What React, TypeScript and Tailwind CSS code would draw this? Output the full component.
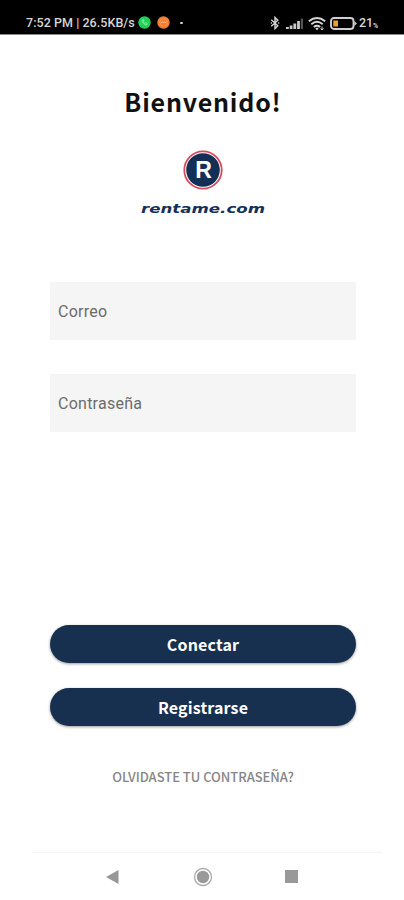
import React, { useState } from 'react';

// Barra de estado del teléfono
const StatusBar: React.FC = () => (
  <header className="flex h-[35px] items-end border-b border-[#8a8a8a] bg-black pr-[25px] pb-[2px] pl-[26px] font-[Roboto,sans-serif] text-[#d6d6d6]">
    <span className="w-[109px] text-[12.5px] leading-[18px] font-medium tracking-[0.05px] whitespace-nowrap">
      7:52 PM | 26.5KB/s
    </span>
    <svg className="mb-[3px] ml-[3px] h-[13px] w-[13px]" viewBox="0 0 13 13">
      <circle cx="6.5" cy="6.5" r="6.2" fill="#22cf5b" />
      <path d="M4.3 3.8c-1.2 1.5 2.7 5.900 4.600 4.900l.3-1.200-1.400-.7-.8.7C6 7 5.600 6.300 5.500 5.800l.5-.7-.6-1.400Z" fill="none" stroke="#8df2a8" strokeWidth=".9" />
    </svg>
    <svg className="mb-[3px] ml-[6px] h-[13px] w-[13px]" viewBox="0 0 13 13">
      <circle cx="6.5" cy="6.5" r="6.2" fill="#f47a2c" />
      <circle cx="6.5" cy="6.5" r="3.8" fill="none" stroke="#fb9d60" strokeWidth=".8" />
      <path d="M3.800 7q1.400-1.600 2.700-.6 1.300-1 2.700.6" fill="none" stroke="#ffc29b" strokeWidth="1" />
    </svg>
    <span className="mb-[8px] ml-[10px] h-[2px] w-[3px] rounded-full bg-[#d0d0d0]" />

    <div className="ml-auto flex h-[18px] items-center">
      <svg className="mr-px h-[14px] w-[10px]" viewBox="0 0 10 15" fill="none" stroke="#d6d6d6" strokeWidth="1.5">
        <path d="m1 4 7 6.5L5 13.5v-12L8 4.500 1 11" />
        <path d="M.5 7.500h1.200M8.400 7.500h1.200" />
      </svg>
      <svg className="ml-[5px] h-[13px] w-[18px]" viewBox="0 0 18 13" fill="#c8c8c8">
        <path d="M0 10h2.800v2H0zM3.700 8.500h2.800V12H3.700zM7.400 6.500h2.800V12H7.400zM11.100 4h2.800v8h-2.800z" />
        <path d="M14.800 1.500H17V12h-2.200z" fill="#555" />
      </svg>
      <svg className="ml-[4px] h-[15px] w-[18px]" viewBox="0 0 18 15" fill="none" stroke="#d6d6d6" strokeWidth="1.900">
        <path d="M.8 5.200q8.200-6.400 16.400 0M3.300 8.200q5.700-4.700 11.400 0M5.800 10.900q3.200-2.500 6.400 0" />
        <path d="m7.300 12.600 1.700-1 1.700 1L9 14.200Z" fill="#d6d6d6" stroke="none" />
        <path d="M14 10.500V14M12.500 12.500 14 14l1.500-1.500" strokeWidth="1" />
      </svg>
      <svg className="ml-[4px] h-[13px] w-[27px]" viewBox="0 0 27 13">
        <rect x="1" y="1" width="22.500" height="11" rx="3" fill="none" stroke="#cfcfcf" strokeWidth="1.900" />
        <path d="M3.300 3.500h4.700v6H3.300z" fill="#f0a029" />
        <path d="M24.300 4 27 6.500 24.300 9z" fill="#cfcfcf" />
      </svg>
      <span className="ml-[2px] w-[14px] text-[12.5px] leading-[18px] font-medium">21</span>
      <span className="mt-[6px] w-[6px] text-[7px] leading-none font-bold">%</span>
    </div>
  </header>
);

const Logo: React.FC = () => (
  <svg className="h-[68px] w-[130px]" viewBox="0 0 130 68" role="img" aria-label="rentame.com">
    <circle cx="65" cy="21" r="18.700" fill="#fff" stroke="#d64b5e" strokeWidth="1.800" />
    <circle cx="65" cy="21" r="16.800" fill="#142f56" />
    <text
      x="65.500"
      y="28.800"
      textAnchor="middle"
      fill="#fff"
      className="font-['Liberation_Sans',Arial,sans-serif] text-[23px] font-bold"
    >
      R
    </text>
    <text
      x="3"
      y="64"
      textLength="124"
      lengthAdjust="spacingAndGlyphs"
      fill="#172f59"
      className="font-['DejaVu_Sans',sans-serif] text-[11.5px] font-bold italic"
    >
      rentame.com
    </text>
  </svg>
);

interface FieldProps {
  label: string;
  type: string;
  value: string;
  onChange: (value: string) => void;
}

const Field: React.FC<FieldProps> = ({ label, type, value, onChange }) => (
  <input
    type={type}
    aria-label={label}
    placeholder={label}
    value={value}
    onChange={(e) => onChange(e.target.value)}
    className="block h-[58px] w-full bg-[#f5f5f5] px-2 font-[Roboto,sans-serif] text-[16px] tracking-[0.25px] text-[#666] outline-none placeholder:text-[#6c6c6c]"
  />
);

const buttonClass =
  "h-[38px] w-full rounded-full bg-[#18304f] text-[16px] leading-none font-bold tracking-[0.15px] text-white shadow-[0_1px_3px_rgba(0,0,0,0.4)]";

const App: React.FC = () => {
  const [email, setEmail] = useState('');
  const [password, setPassword] = useState('');

  return (
    <div className="flex h-[900px] w-[404px] flex-col overflow-hidden bg-white font-['Noto_Sans_CJK_SC',sans-serif]">
      <StatusBar />

      <main className="flex flex-1 flex-col items-center pr-12 pl-[50px]">
        <h1 className="mt-[46px] text-[25px] leading-[40px] font-bold tracking-[0.8px] text-[#111]">
          Bienvenido!
        </h1>
        <div className="mt-[28px]">
          <Logo />
        </div>

        <form className="mt-[65px] flex w-full flex-col" onSubmit={(e) => e.preventDefault()}>
          <div className="flex flex-col gap-[34px]">
            <Field label="Correo" type="email" value={email} onChange={setEmail} />
            <Field label="Contraseña" type="password" value={password} onChange={setPassword} />
          </div>
          <div className="mt-[193px] flex flex-col gap-[25px]">
            <button type="submit" className={buttonClass}>
              Conectar
            </button>
            <button type="button" className={buttonClass}>
              Registrarse
            </button>
          </div>
        </form>

        <a href="#" className="mt-[41px] text-[13px] leading-[20px] font-medium tracking-[-0.03px] text-[#868686]">
          OLVIDASTE TU CONTRASEÑA?
        </a>
      </main>

      {/* Navegación de Android */}
      <nav className="mr-[22px] ml-[33px] flex h-[48px] items-center border-t border-[#f5f5f5] pl-[73px]">
        <svg className="h-[14px] w-[13px]" viewBox="0 0 13 14">
          <path d="M0 7 12.500 0v14z" fill="#979797" />
        </svg>
        <svg className="ml-[74px] h-[20px] w-[20px]" viewBox="0 0 20 20">
          <circle cx="10" cy="10" r="8.500" fill="none" stroke="#aaa" strokeWidth="1.300" />
          <circle cx="10" cy="10" r="6.200" fill="#999" />
        </svg>
        <span className="ml-[72px] h-[13px] w-[13px] bg-[#999]" />
      </nav>
    </div>
  );
};

export default App;
